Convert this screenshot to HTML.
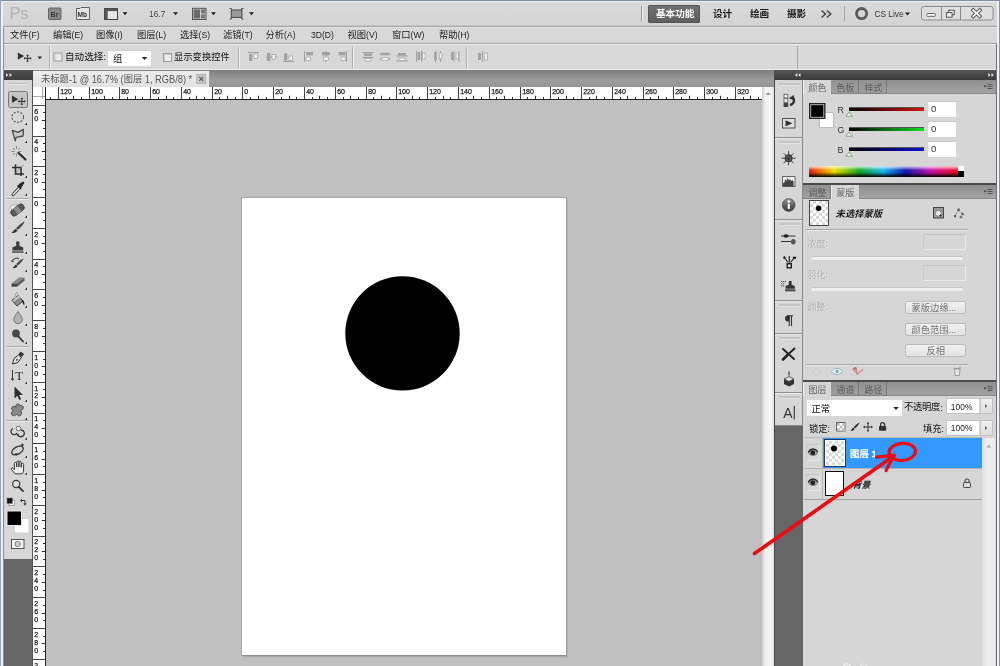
<!DOCTYPE html>
<html><head><meta charset="utf-8"><title>Photoshop CS5</title>
<style>
html,body{margin:0;padding:0;}
body{width:1000px;height:666px;overflow:hidden;position:relative;background:#c0c0c0;font-family:'Liberation Sans', 'Noto Sans CJK SC', sans-serif;}
#r{position:absolute;left:0;top:0;width:1000px;height:666px;overflow:hidden;}
#r div{position:absolute;box-sizing:border-box;}
#o{position:absolute;left:0;top:0;will-change:transform;filter:blur(0.35px);}
#o text{font-family:'Liberation Sans', 'Noto Sans CJK SC', sans-serif;white-space:pre;}
</style></head><body><div id="r">
<div style="left:46px;top:100px;width:716px;height:566px;background:#c0c0c0;"></div>
<div style="left:0px;top:0px;width:1000px;height:27px;background:linear-gradient(#dadada,#d3d3d3);"></div>
<div style="left:0px;top:0px;width:1000px;height:1px;background:#7f8aa3;"></div>
<div style="left:0px;top:25px;width:1000px;height:1px;background:#c8c8c8;"></div>
<div style="left:0px;top:26px;width:1000px;height:1px;background:#a4a4a4;"></div>
<div style="left:0px;top:27px;width:1000px;height:17px;background:#d8d8d8;"></div>
<div style="left:0px;top:27px;width:1000px;height:1px;background:#e4e4e4;"></div>
<div style="left:0px;top:43px;width:1000px;height:1px;background:#a0a0a0;"></div>
<div style="left:0px;top:44px;width:1000px;height:1px;background:#f2f2f2;"></div>
<div style="left:0px;top:45px;width:1000px;height:25px;background:#d8d8d8;"></div>
<div style="left:0px;top:69px;width:1000px;height:1px;background:#ededed;"></div>
<div style="left:33px;top:70px;width:741px;height:17px;background:linear-gradient(#7e7e7e,#9c9c9c 60%,#949494);"></div>
<div style="left:4px;top:70px;width:29px;height:489px;background:#d6d6d6;"></div>
<div style="left:4px;top:70px;width:29px;height:10px;background:linear-gradient(#505050,#3c3c3c);"></div>
<div style="left:4px;top:559px;width:29px;height:107px;background:#666666;"></div>
<div style="left:32px;top:80px;width:1px;height:586px;background:#555;"></div>
<div style="left:33px;top:87px;width:729px;height:12px;background:#ffffff;"></div>
<div style="left:33px;top:99px;width:729px;height:1px;background:#222;"></div>
<div style="left:33px;top:99px;width:12px;height:567px;background:#ffffff;"></div>
<div style="left:45px;top:87px;width:1px;height:579px;background:#222;"></div>
<div style="left:33px;top:86px;width:13px;height:1px;background:#888;"></div>
<div style="left:241px;top:197px;width:326px;height:459px;background:#a4a4a4;"></div>
<div style="left:242px;top:198px;width:324px;height:457px;background:#ffffff;"></div>
<div style="left:242px;top:655px;width:325px;height:1px;background:#8e8e8e;"></div>
<div style="left:243px;top:656px;width:325px;height:1px;background:#a6a6a6;"></div>
<div style="left:244px;top:657px;width:324px;height:1px;background:#b8b8b8;"></div>
<div style="left:566px;top:198px;width:1px;height:458px;background:#9a9a9a;"></div>
<div style="left:567px;top:199px;width:1px;height:458px;background:#b6b6b6;"></div>
<div style="left:762px;top:87px;width:12px;height:579px;background:linear-gradient(90deg,#cfcfcf,#f2f2f2 30%,#f4f4f4 80%,#dcdcdc);"></div>
<div style="left:774px;top:70px;width:1px;height:596px;background:#4a4a4a;"></div>
<div style="left:775px;top:70px;width:221px;height:10px;background:linear-gradient(#555,#3a3a3a);"></div>
<div style="left:775px;top:80px;width:27px;height:346px;background:#d6d6d6;"></div>
<div style="left:775px;top:426px;width:28px;height:240px;background:#666666;"></div>
<div style="left:802px;top:80px;width:1px;height:346px;background:#8a8a8a;"></div>
<div style="left:803px;top:80px;width:193px;height:586px;background:#d6d6d6;"></div>
<div style="left:0px;top:0px;width:1px;height:666px;background:#9aa2b8;"></div>
<div style="left:1px;top:1px;width:2px;height:665px;background:#eef1fa;"></div>
<div style="left:3px;top:27px;width:1px;height:639px;background:#8e8e96;"></div>
<div style="left:996px;top:44px;width:1px;height:622px;background:#707070;"></div>
<div style="left:997px;top:1px;width:2px;height:665px;background:#eef1fa;"></div>
<div style="left:999px;top:0px;width:1px;height:666px;background:#8890a8;"></div>
<div style="left:1px;top:1px;width:998px;height:1px;background:#eceef6;"></div>
<div style="left:641px;top:6px;width:1px;height:15px;background:#9a9a9a;"></div>
<div style="left:642px;top:6px;width:1px;height:15px;background:#eee;"></div>
<div style="left:648px;top:5px;width:52px;height:18px;background:linear-gradient(#6e6e6e,#5f5f5f);border:1px solid #555;border-radius:1px;"></div>
<div style="left:844px;top:6px;width:1px;height:15px;background:#a8a8a8;"></div>
<div style="left:5px;top:47px;width:2px;height:20px;background:linear-gradient(90deg,#bcbcbc,#eee);"></div>
<div style="left:49px;top:46px;width:1px;height:23px;background:#b0b0b0;"></div>
<div style="left:50px;top:46px;width:1px;height:23px;background:#f0f0f0;"></div>
<div style="left:108px;top:50px;width:43px;height:16px;background:#ffffff;border-top:1px solid #cfcfcf;"></div>
<div style="left:238px;top:47px;width:1px;height:21px;background:#b0b0b0;"></div>
<div style="left:239px;top:47px;width:1px;height:21px;background:#f0f0f0;"></div>
<div style="left:352px;top:47px;width:1px;height:21px;background:#b0b0b0;"></div>
<div style="left:353px;top:47px;width:1px;height:21px;background:#f0f0f0;"></div>
<div style="left:466px;top:47px;width:1px;height:21px;background:#b0b0b0;"></div>
<div style="left:467px;top:47px;width:1px;height:21px;background:#f0f0f0;"></div>
<div style="left:797px;top:46px;width:1px;height:23px;background:#a8a8a8;"></div>
<div style="left:33px;top:71px;width:177px;height:16px;background:linear-gradient(#ececec,#e2e2e2);border-right:1px solid #9a9a9a;"></div>
<div style="left:33px;top:70px;width:741px;height:1px;background:#808080;"></div>
<div style="left:9px;top:83px;width:18px;height:1px;background:#bdbdbd;"></div>
<div style="left:9px;top:84px;width:18px;height:1px;background:#e8e8e8;"></div>
<div style="left:7px;top:198px;width:22px;height:1px;background:#a8a8a8;"></div>
<div style="left:7px;top:199px;width:22px;height:1px;background:#ececec;"></div>
<div style="left:7px;top:346px;width:22px;height:1px;background:#a8a8a8;"></div>
<div style="left:7px;top:347px;width:22px;height:1px;background:#ececec;"></div>
<div style="left:7px;top:420px;width:22px;height:1px;background:#a8a8a8;"></div>
<div style="left:7px;top:421px;width:22px;height:1px;background:#ececec;"></div>
<div style="left:779px;top:83px;width:21px;height:2px;background:#c4c4c4;"></div>
<div style="left:779px;top:85px;width:21px;height:1px;background:#e2e2e2;"></div>
<div style="left:775px;top:137px;width:27px;height:1px;background:#8e8e8e;"></div>
<div style="left:775px;top:138px;width:27px;height:1px;background:#e8e8e8;"></div>
<div style="left:779px;top:141px;width:21px;height:2px;background:#c4c4c4;"></div>
<div style="left:779px;top:143px;width:21px;height:1px;background:#e2e2e2;"></div>
<div style="left:775px;top:219px;width:27px;height:1px;background:#8e8e8e;"></div>
<div style="left:775px;top:220px;width:27px;height:1px;background:#e8e8e8;"></div>
<div style="left:779px;top:223px;width:21px;height:2px;background:#c4c4c4;"></div>
<div style="left:779px;top:225px;width:21px;height:1px;background:#e2e2e2;"></div>
<div style="left:775px;top:300px;width:27px;height:1px;background:#8e8e8e;"></div>
<div style="left:775px;top:301px;width:27px;height:1px;background:#e8e8e8;"></div>
<div style="left:779px;top:304px;width:21px;height:2px;background:#c4c4c4;"></div>
<div style="left:779px;top:306px;width:21px;height:1px;background:#e2e2e2;"></div>
<div style="left:775px;top:333px;width:27px;height:1px;background:#8e8e8e;"></div>
<div style="left:775px;top:334px;width:27px;height:1px;background:#e8e8e8;"></div>
<div style="left:779px;top:337px;width:21px;height:2px;background:#c4c4c4;"></div>
<div style="left:779px;top:339px;width:21px;height:1px;background:#e2e2e2;"></div>
<div style="left:775px;top:392px;width:27px;height:1px;background:#8e8e8e;"></div>
<div style="left:775px;top:393px;width:27px;height:1px;background:#e8e8e8;"></div>
<div style="left:779px;top:396px;width:21px;height:2px;background:#c4c4c4;"></div>
<div style="left:779px;top:398px;width:21px;height:1px;background:#e2e2e2;"></div>
<div style="left:775px;top:425px;width:28px;height:1px;background:#8e8e8e;"></div>
<div style="left:803px;top:80px;width:193px;height:14px;background:linear-gradient(#8f8f8f,#a4a4a4);"></div>
<div style="left:803px;top:93px;width:193px;height:1px;background:#8a8a8a;"></div>
<div style="left:803px;top:80px;width:28px;height:14px;background:#d6d6d6;border-left:1px solid #efefef;"></div>
<div style="left:831px;top:80px;width:28px;height:14px;background:linear-gradient(#929292,#9e9e9e);border-right:1px solid #7a7a7a;border-bottom:1px solid #808080;"></div>
<div style="left:859px;top:80px;width:28px;height:14px;background:linear-gradient(#929292,#9e9e9e);border-right:1px solid #7a7a7a;border-bottom:1px solid #808080;"></div>
<div style="left:849px;top:107px;width:75px;height:4px;background:linear-gradient(90deg,#000,#e01010);border-top:1px solid #555;"></div>
<div style="left:928px;top:101px;width:28px;height:16px;background:#fff;border-top:1px solid #c8c8c8;"></div>
<div style="left:849px;top:127px;width:75px;height:4px;background:linear-gradient(90deg,#000,#10e020);border-top:1px solid #555;"></div>
<div style="left:928px;top:121px;width:28px;height:16px;background:#fff;border-top:1px solid #c8c8c8;"></div>
<div style="left:849px;top:147px;width:75px;height:4px;background:linear-gradient(90deg,#000,#1010e0);border-top:1px solid #555;"></div>
<div style="left:928px;top:141px;width:28px;height:16px;background:#fff;border-top:1px solid #c8c8c8;"></div>
<div style="left:809px;top:166px;width:149px;height:11px;background:linear-gradient(rgba(255,255,255,0.8),rgba(255,255,255,0) 40%,rgba(0,0,0,0) 55%,rgba(0,0,0,1)),linear-gradient(90deg,#e8200c,#f0e000 17%,#10a828 34%,#18b4f0 50%,#1414b0 65%,#c814a8 82%,#f01010);"></div>
<div style="left:958px;top:166px;width:6px;height:5px;background:#fff;"></div>
<div style="left:958px;top:171px;width:6px;height:6px;background:#000;"></div>
<div style="left:803px;top:183px;width:193px;height:2px;background:#4a4a4a;"></div>
<div style="left:803px;top:185px;width:193px;height:14px;background:linear-gradient(#8f8f8f,#a4a4a4);"></div>
<div style="left:803px;top:198px;width:193px;height:1px;background:#8a8a8a;"></div>
<div style="left:803px;top:185px;width:28px;height:14px;background:linear-gradient(#929292,#9e9e9e);border-right:1px solid #7a7a7a;border-bottom:1px solid #808080;"></div>
<div style="left:831px;top:185px;width:28px;height:14px;background:#d6d6d6;border-left:1px solid #efefef;"></div>
<div style="left:809px;top:200px;width:20px;height:26px;background:#444;"></div>
<div style="left:810px;top:201px;width:18px;height:24px;background:#fff;background-image:linear-gradient(45deg,#dadada 25%,transparent 25%,transparent 75%,#dadada 75%),linear-gradient(45deg,#dadada 25%,transparent 25%,transparent 75%,#dadada 75%);background-size:6px 6px;background-position:0 0,3px 3px;"></div>
<div style="left:806px;top:229px;width:162px;height:1px;background:#a9a9a9;"></div>
<div style="left:806px;top:230px;width:162px;height:1px;background:#e4e4e4;"></div>
<div style="left:923px;top:234px;width:43px;height:16px;border:1px solid #e9e9e9;border-top-color:#c4c4c4;border-left-color:#c8c8c8;"></div>
<div style="left:811px;top:256px;width:152px;height:4px;background:#efefef;border-radius:2px;border-top:1px solid #c6c6c6;"></div>
<div style="left:923px;top:265px;width:43px;height:16px;border:1px solid #e9e9e9;border-top-color:#c4c4c4;border-left-color:#c8c8c8;"></div>
<div style="left:811px;top:287px;width:152px;height:4px;background:#efefef;border-radius:2px;border-top:1px solid #c6c6c6;"></div>
<div style="left:905px;top:301px;width:61px;height:13px;background:linear-gradient(#f0f0f0,#e2e2e2);border:1px solid #bdbdbd;border-radius:2px;"></div>
<div style="left:905px;top:323px;width:61px;height:13px;background:linear-gradient(#f0f0f0,#e2e2e2);border:1px solid #bdbdbd;border-radius:2px;"></div>
<div style="left:905px;top:344px;width:61px;height:13px;background:linear-gradient(#f0f0f0,#e2e2e2);border:1px solid #bdbdbd;border-radius:2px;"></div>
<div style="left:806px;top:364px;width:162px;height:1px;background:#a9a9a9;"></div>
<div style="left:806px;top:365px;width:162px;height:1px;background:#e4e4e4;"></div>
<div style="left:803px;top:380px;width:193px;height:2px;background:#4a4a4a;"></div>
<div style="left:803px;top:382px;width:193px;height:14px;background:linear-gradient(#8f8f8f,#a4a4a4);"></div>
<div style="left:803px;top:395px;width:193px;height:1px;background:#8a8a8a;"></div>
<div style="left:803px;top:382px;width:28px;height:14px;background:#d6d6d6;border-left:1px solid #efefef;"></div>
<div style="left:831px;top:382px;width:28px;height:14px;background:linear-gradient(#929292,#9e9e9e);border-right:1px solid #7a7a7a;border-bottom:1px solid #808080;"></div>
<div style="left:859px;top:382px;width:28px;height:14px;background:linear-gradient(#929292,#9e9e9e);border-right:1px solid #7a7a7a;border-bottom:1px solid #808080;"></div>
<div style="left:807px;top:400px;width:95px;height:16px;background:#fff;"></div>
<div style="left:946px;top:398px;width:47px;height:16px;border:1px solid #c2c2c2;border-radius:1px;"></div>
<div style="left:947px;top:399px;width:32px;height:14px;background:#fff;"></div>
<div style="left:980px;top:399px;width:12px;height:14px;background:linear-gradient(#f0f0f0,#dedede);border-left:1px solid #c6c6c6;"></div>
<div style="left:946px;top:420px;width:47px;height:16px;border:1px solid #c2c2c2;border-radius:1px;"></div>
<div style="left:947px;top:421px;width:32px;height:14px;background:#fff;"></div>
<div style="left:980px;top:421px;width:12px;height:14px;background:linear-gradient(#f0f0f0,#dedede);border-left:1px solid #c6c6c6;"></div>
<div style="left:804px;top:437px;width:178px;height:1px;background:#bcbcbc;"></div>
<div style="left:823px;top:438px;width:159px;height:30px;background:#3399ff;"></div>
<div style="left:822px;top:438px;width:1px;height:61px;background:#bdbdbd;"></div>
<div style="left:804px;top:468px;width:178px;height:1px;background:#b4b4b4;"></div>
<div style="left:804px;top:499px;width:178px;height:1px;background:#a4a4a4;"></div>
<div style="left:982px;top:438px;width:13px;height:228px;background:linear-gradient(90deg,#dedede,#efefef 40%,#ebebeb);"></div>
<div style="left:806px;top:444px;width:14px;height:17px;border:1px solid #c4c4c4;border-right-color:#e6e6e6;border-bottom-color:#e6e6e6;"></div>
<div style="left:806px;top:474px;width:14px;height:17px;border:1px solid #c4c4c4;border-right-color:#e6e6e6;border-bottom-color:#e6e6e6;"></div>
<div style="left:824px;top:439px;width:22px;height:28px;background:#fff;border:1px solid #1a3d6e;"></div>
<div style="left:825px;top:440px;width:20px;height:26px;background:#000;border:1px solid #fff;"></div>
<div style="left:826px;top:441px;width:18px;height:24px;background:#fff;background-image:linear-gradient(45deg,#dadada 25%,transparent 25%,transparent 75%,#dadada 75%),linear-gradient(45deg,#dadada 25%,transparent 25%,transparent 75%,#dadada 75%);background-size:6px 6px;background-position:0 0,3px 3px;"></div>
<div style="left:825px;top:471px;width:19px;height:25px;background:#fff;border:1px solid #111;"></div>
<svg id="o" width="1000" height="666" viewBox="0 0 1000 666"><defs><linearGradient id="ginfo" x1="0" y1="0" x2="0" y2="1"><stop offset="0" stop-color="#9a9a9a"/><stop offset="0.5" stop-color="#5e5e5e"/><stop offset="1" stop-color="#3e3e3e"/></linearGradient></defs>
<circle cx="402.5" cy="333.4" r="57.2" fill="#000"/>
<path d="M765.500 95l2.700 -3l2.700 3z" fill="#9a9a9a"/>
<g fill="#1a1a1a"><text x="60.20" y="94.40" font-size="7" stroke="#1a1a1a" stroke-width="0.25">120</text></g>
<g fill="#1a1a1a"><text x="91.20" y="94.40" font-size="7" stroke="#1a1a1a" stroke-width="0.25">100</text></g>
<g fill="#1a1a1a"><text x="121.20" y="94.40" font-size="7" stroke="#1a1a1a" stroke-width="0.25">80</text></g>
<g fill="#1a1a1a"><text x="152.20" y="94.40" font-size="7" stroke="#1a1a1a" stroke-width="0.25">60</text></g>
<g fill="#1a1a1a"><text x="183.20" y="94.40" font-size="7" stroke="#1a1a1a" stroke-width="0.25">40</text></g>
<g fill="#1a1a1a"><text x="214.20" y="94.40" font-size="7" stroke="#1a1a1a" stroke-width="0.25">20</text></g>
<g fill="#1a1a1a"><text x="244.20" y="94.40" font-size="7" stroke="#1a1a1a" stroke-width="0.25">0</text></g>
<g fill="#1a1a1a"><text x="275.20" y="94.40" font-size="7" stroke="#1a1a1a" stroke-width="0.25">20</text></g>
<g fill="#1a1a1a"><text x="306.20" y="94.40" font-size="7" stroke="#1a1a1a" stroke-width="0.25">40</text></g>
<g fill="#1a1a1a"><text x="337.20" y="94.40" font-size="7" stroke="#1a1a1a" stroke-width="0.25">60</text></g>
<g fill="#1a1a1a"><text x="368.20" y="94.40" font-size="7" stroke="#1a1a1a" stroke-width="0.25">80</text></g>
<g fill="#1a1a1a"><text x="398.20" y="94.40" font-size="7" stroke="#1a1a1a" stroke-width="0.25">100</text></g>
<g fill="#1a1a1a"><text x="429.20" y="94.40" font-size="7" stroke="#1a1a1a" stroke-width="0.25">120</text></g>
<g fill="#1a1a1a"><text x="460.20" y="94.40" font-size="7" stroke="#1a1a1a" stroke-width="0.25">140</text></g>
<g fill="#1a1a1a"><text x="491.20" y="94.40" font-size="7" stroke="#1a1a1a" stroke-width="0.25">160</text></g>
<g fill="#1a1a1a"><text x="522.20" y="94.40" font-size="7" stroke="#1a1a1a" stroke-width="0.25">180</text></g>
<g fill="#1a1a1a"><text x="552.20" y="94.40" font-size="7" stroke="#1a1a1a" stroke-width="0.25">200</text></g>
<g fill="#1a1a1a"><text x="583.20" y="94.40" font-size="7" stroke="#1a1a1a" stroke-width="0.25">220</text></g>
<g fill="#1a1a1a"><text x="614.20" y="94.40" font-size="7" stroke="#1a1a1a" stroke-width="0.25">240</text></g>
<g fill="#1a1a1a"><text x="645.20" y="94.40" font-size="7" stroke="#1a1a1a" stroke-width="0.25">260</text></g>
<g fill="#1a1a1a"><text x="675.20" y="94.40" font-size="7" stroke="#1a1a1a" stroke-width="0.25">280</text></g>
<g fill="#1a1a1a"><text x="706.20" y="94.40" font-size="7" stroke="#1a1a1a" stroke-width="0.25">300</text></g>
<g fill="#1a1a1a"><text x="737.20" y="94.40" font-size="7" stroke="#1a1a1a" stroke-width="0.25">320</text></g>
<g fill="#1a1a1a"><text x="34.30" y="113.56" font-size="7" stroke="#1a1a1a" stroke-width="0.25">6</text></g>
<g fill="#1a1a1a"><text x="34.30" y="121.46" font-size="7" stroke="#1a1a1a" stroke-width="0.25">0</text></g>
<g fill="#1a1a1a"><text x="34.30" y="144.34" font-size="7" stroke="#1a1a1a" stroke-width="0.25">4</text></g>
<g fill="#1a1a1a"><text x="34.30" y="152.24" font-size="7" stroke="#1a1a1a" stroke-width="0.25">0</text></g>
<g fill="#1a1a1a"><text x="34.30" y="175.12" font-size="7" stroke="#1a1a1a" stroke-width="0.25">2</text></g>
<g fill="#1a1a1a"><text x="34.30" y="183.02" font-size="7" stroke="#1a1a1a" stroke-width="0.25">0</text></g>
<g fill="#1a1a1a"><text x="34.30" y="205.90" font-size="7" stroke="#1a1a1a" stroke-width="0.25">0</text></g>
<g fill="#1a1a1a"><text x="34.30" y="236.68" font-size="7" stroke="#1a1a1a" stroke-width="0.25">2</text></g>
<g fill="#1a1a1a"><text x="34.30" y="244.58" font-size="7" stroke="#1a1a1a" stroke-width="0.25">0</text></g>
<g fill="#1a1a1a"><text x="34.30" y="267.46" font-size="7" stroke="#1a1a1a" stroke-width="0.25">4</text></g>
<g fill="#1a1a1a"><text x="34.30" y="275.36" font-size="7" stroke="#1a1a1a" stroke-width="0.25">0</text></g>
<g fill="#1a1a1a"><text x="34.30" y="298.24" font-size="7" stroke="#1a1a1a" stroke-width="0.25">6</text></g>
<g fill="#1a1a1a"><text x="34.30" y="306.14" font-size="7" stroke="#1a1a1a" stroke-width="0.25">0</text></g>
<g fill="#1a1a1a"><text x="34.30" y="329.02" font-size="7" stroke="#1a1a1a" stroke-width="0.25">8</text></g>
<g fill="#1a1a1a"><text x="34.30" y="336.92" font-size="7" stroke="#1a1a1a" stroke-width="0.25">0</text></g>
<g fill="#1a1a1a"><text x="34.30" y="359.80" font-size="7" stroke="#1a1a1a" stroke-width="0.25">1</text></g>
<g fill="#1a1a1a"><text x="34.30" y="367.70" font-size="7" stroke="#1a1a1a" stroke-width="0.25">0</text></g>
<g fill="#1a1a1a"><text x="34.30" y="375.60" font-size="7" stroke="#1a1a1a" stroke-width="0.25">0</text></g>
<g fill="#1a1a1a"><text x="34.30" y="390.58" font-size="7" stroke="#1a1a1a" stroke-width="0.25">1</text></g>
<g fill="#1a1a1a"><text x="34.30" y="398.48" font-size="7" stroke="#1a1a1a" stroke-width="0.25">2</text></g>
<g fill="#1a1a1a"><text x="34.30" y="406.38" font-size="7" stroke="#1a1a1a" stroke-width="0.25">0</text></g>
<g fill="#1a1a1a"><text x="34.30" y="421.36" font-size="7" stroke="#1a1a1a" stroke-width="0.25">1</text></g>
<g fill="#1a1a1a"><text x="34.30" y="429.26" font-size="7" stroke="#1a1a1a" stroke-width="0.25">4</text></g>
<g fill="#1a1a1a"><text x="34.30" y="437.16" font-size="7" stroke="#1a1a1a" stroke-width="0.25">0</text></g>
<g fill="#1a1a1a"><text x="34.30" y="452.14" font-size="7" stroke="#1a1a1a" stroke-width="0.25">1</text></g>
<g fill="#1a1a1a"><text x="34.30" y="460.04" font-size="7" stroke="#1a1a1a" stroke-width="0.25">6</text></g>
<g fill="#1a1a1a"><text x="34.30" y="467.94" font-size="7" stroke="#1a1a1a" stroke-width="0.25">0</text></g>
<g fill="#1a1a1a"><text x="34.30" y="482.92" font-size="7" stroke="#1a1a1a" stroke-width="0.25">1</text></g>
<g fill="#1a1a1a"><text x="34.30" y="490.82" font-size="7" stroke="#1a1a1a" stroke-width="0.25">8</text></g>
<g fill="#1a1a1a"><text x="34.30" y="498.72" font-size="7" stroke="#1a1a1a" stroke-width="0.25">0</text></g>
<g fill="#1a1a1a"><text x="34.30" y="513.70" font-size="7" stroke="#1a1a1a" stroke-width="0.25">2</text></g>
<g fill="#1a1a1a"><text x="34.30" y="521.60" font-size="7" stroke="#1a1a1a" stroke-width="0.25">0</text></g>
<g fill="#1a1a1a"><text x="34.30" y="529.50" font-size="7" stroke="#1a1a1a" stroke-width="0.25">0</text></g>
<g fill="#1a1a1a"><text x="34.30" y="544.48" font-size="7" stroke="#1a1a1a" stroke-width="0.25">2</text></g>
<g fill="#1a1a1a"><text x="34.30" y="552.38" font-size="7" stroke="#1a1a1a" stroke-width="0.25">2</text></g>
<g fill="#1a1a1a"><text x="34.30" y="560.28" font-size="7" stroke="#1a1a1a" stroke-width="0.25">0</text></g>
<g fill="#1a1a1a"><text x="34.30" y="575.26" font-size="7" stroke="#1a1a1a" stroke-width="0.25">2</text></g>
<g fill="#1a1a1a"><text x="34.30" y="583.16" font-size="7" stroke="#1a1a1a" stroke-width="0.25">4</text></g>
<g fill="#1a1a1a"><text x="34.30" y="591.06" font-size="7" stroke="#1a1a1a" stroke-width="0.25">0</text></g>
<g fill="#1a1a1a"><text x="34.30" y="606.04" font-size="7" stroke="#1a1a1a" stroke-width="0.25">2</text></g>
<g fill="#1a1a1a"><text x="34.30" y="613.94" font-size="7" stroke="#1a1a1a" stroke-width="0.25">6</text></g>
<g fill="#1a1a1a"><text x="34.30" y="621.84" font-size="7" stroke="#1a1a1a" stroke-width="0.25">0</text></g>
<g fill="#1a1a1a"><text x="34.30" y="636.82" font-size="7" stroke="#1a1a1a" stroke-width="0.25">2</text></g>
<g fill="#1a1a1a"><text x="34.30" y="644.72" font-size="7" stroke="#1a1a1a" stroke-width="0.25">8</text></g>
<g fill="#1a1a1a"><text x="34.30" y="652.62" font-size="7" stroke="#1a1a1a" stroke-width="0.25">0</text></g>
<g fill="#1a1a1a"><text x="34.30" y="667.60" font-size="7" stroke="#1a1a1a" stroke-width="0.25">3</text></g>
<rect x="50" y="97" width="1" height="2" fill="#333"/><rect x="58" y="87" width="1" height="12" fill="#444"/><rect x="66" y="97" width="1" height="2" fill="#333"/><rect x="73" y="95.8" width="1" height="3.2" fill="#333"/><rect x="81" y="97" width="1" height="2" fill="#333"/><rect x="89" y="87" width="1" height="12" fill="#444"/><rect x="96" y="97" width="1" height="2" fill="#333"/><rect x="104" y="95.8" width="1" height="3.2" fill="#333"/><rect x="112" y="97" width="1" height="2" fill="#333"/><rect x="119" y="87" width="1" height="12" fill="#444"/><rect x="127" y="97" width="1" height="2" fill="#333"/><rect x="135" y="95.8" width="1" height="3.2" fill="#333"/><rect x="142" y="97" width="1" height="2" fill="#333"/><rect x="150" y="87" width="1" height="12" fill="#444"/><rect x="158" y="97" width="1" height="2" fill="#333"/><rect x="166" y="95.8" width="1" height="3.2" fill="#333"/><rect x="173" y="97" width="1" height="2" fill="#333"/><rect x="181" y="87" width="1" height="12" fill="#444"/><rect x="189" y="97" width="1" height="2" fill="#333"/><rect x="196" y="95.8" width="1" height="3.2" fill="#333"/><rect x="204" y="97" width="1" height="2" fill="#333"/><rect x="212" y="87" width="1" height="12" fill="#444"/><rect x="219" y="97" width="1" height="2" fill="#333"/><rect x="227" y="95.8" width="1" height="3.2" fill="#333"/><rect x="235" y="97" width="1" height="2" fill="#333"/><rect x="242" y="87" width="1" height="12" fill="#444"/><rect x="250" y="97" width="1" height="2" fill="#333"/><rect x="258" y="95.8" width="1" height="3.2" fill="#333"/><rect x="266" y="97" width="1" height="2" fill="#333"/><rect x="273" y="87" width="1" height="12" fill="#444"/><rect x="281" y="97" width="1" height="2" fill="#333"/><rect x="289" y="95.8" width="1" height="3.2" fill="#333"/><rect x="296" y="97" width="1" height="2" fill="#333"/><rect x="304" y="87" width="1" height="12" fill="#444"/><rect x="312" y="97" width="1" height="2" fill="#333"/><rect x="319" y="95.8" width="1" height="3.2" fill="#333"/><rect x="327" y="97" width="1" height="2" fill="#333"/><rect x="335" y="87" width="1" height="12" fill="#444"/><rect x="343" y="97" width="1" height="2" fill="#333"/><rect x="350" y="95.8" width="1" height="3.2" fill="#333"/><rect x="358" y="97" width="1" height="2" fill="#333"/><rect x="366" y="87" width="1" height="12" fill="#444"/><rect x="373" y="97" width="1" height="2" fill="#333"/><rect x="381" y="95.8" width="1" height="3.2" fill="#333"/><rect x="389" y="97" width="1" height="2" fill="#333"/><rect x="396" y="87" width="1" height="12" fill="#444"/><rect x="404" y="97" width="1" height="2" fill="#333"/><rect x="412" y="95.8" width="1" height="3.2" fill="#333"/><rect x="419" y="97" width="1" height="2" fill="#333"/><rect x="427" y="87" width="1" height="12" fill="#444"/><rect x="435" y="97" width="1" height="2" fill="#333"/><rect x="443" y="95.8" width="1" height="3.2" fill="#333"/><rect x="450" y="97" width="1" height="2" fill="#333"/><rect x="458" y="87" width="1" height="12" fill="#444"/><rect x="466" y="97" width="1" height="2" fill="#333"/><rect x="473" y="95.8" width="1" height="3.2" fill="#333"/><rect x="481" y="97" width="1" height="2" fill="#333"/><rect x="489" y="87" width="1" height="12" fill="#444"/><rect x="496" y="97" width="1" height="2" fill="#333"/><rect x="504" y="95.8" width="1" height="3.2" fill="#333"/><rect x="512" y="97" width="1" height="2" fill="#333"/><rect x="520" y="87" width="1" height="12" fill="#444"/><rect x="527" y="97" width="1" height="2" fill="#333"/><rect x="535" y="95.8" width="1" height="3.2" fill="#333"/><rect x="543" y="97" width="1" height="2" fill="#333"/><rect x="550" y="87" width="1" height="12" fill="#444"/><rect x="558" y="97" width="1" height="2" fill="#333"/><rect x="566" y="95.8" width="1" height="3.2" fill="#333"/><rect x="573" y="97" width="1" height="2" fill="#333"/><rect x="581" y="87" width="1" height="12" fill="#444"/><rect x="589" y="97" width="1" height="2" fill="#333"/><rect x="596" y="95.8" width="1" height="3.2" fill="#333"/><rect x="604" y="97" width="1" height="2" fill="#333"/><rect x="612" y="87" width="1" height="12" fill="#444"/><rect x="620" y="97" width="1" height="2" fill="#333"/><rect x="627" y="95.8" width="1" height="3.2" fill="#333"/><rect x="635" y="97" width="1" height="2" fill="#333"/><rect x="643" y="87" width="1" height="12" fill="#444"/><rect x="650" y="97" width="1" height="2" fill="#333"/><rect x="658" y="95.8" width="1" height="3.2" fill="#333"/><rect x="666" y="97" width="1" height="2" fill="#333"/><rect x="673" y="87" width="1" height="12" fill="#444"/><rect x="681" y="97" width="1" height="2" fill="#333"/><rect x="689" y="95.8" width="1" height="3.2" fill="#333"/><rect x="697" y="97" width="1" height="2" fill="#333"/><rect x="704" y="87" width="1" height="12" fill="#444"/><rect x="712" y="97" width="1" height="2" fill="#333"/><rect x="720" y="95.8" width="1" height="3.2" fill="#333"/><rect x="727" y="97" width="1" height="2" fill="#333"/><rect x="735" y="87" width="1" height="12" fill="#444"/><rect x="743" y="97" width="1" height="2" fill="#333"/><rect x="750" y="95.8" width="1" height="3.2" fill="#333"/><rect x="758" y="97" width="1" height="2" fill="#333"/><rect x="33" y="105" width="12" height="1" fill="#444"/><rect x="43" y="112" width="2" height="1" fill="#333"/><rect x="41.8" y="120" width="3.2" height="1" fill="#333"/><rect x="43" y="128" width="2" height="1" fill="#333"/><rect x="33" y="136" width="12" height="1" fill="#444"/><rect x="43" y="143" width="2" height="1" fill="#333"/><rect x="41.8" y="151" width="3.2" height="1" fill="#333"/><rect x="43" y="159" width="2" height="1" fill="#333"/><rect x="33" y="166" width="12" height="1" fill="#444"/><rect x="43" y="174" width="2" height="1" fill="#333"/><rect x="41.8" y="182" width="3.2" height="1" fill="#333"/><rect x="43" y="189" width="2" height="1" fill="#333"/><rect x="33" y="197" width="12" height="1" fill="#444"/><rect x="43" y="205" width="2" height="1" fill="#333"/><rect x="41.8" y="212" width="3.2" height="1" fill="#333"/><rect x="43" y="220" width="2" height="1" fill="#333"/><rect x="33" y="228" width="12" height="1" fill="#444"/><rect x="43" y="236" width="2" height="1" fill="#333"/><rect x="41.8" y="243" width="3.2" height="1" fill="#333"/><rect x="43" y="251" width="2" height="1" fill="#333"/><rect x="33" y="259" width="12" height="1" fill="#444"/><rect x="43" y="266" width="2" height="1" fill="#333"/><rect x="41.8" y="274" width="3.2" height="1" fill="#333"/><rect x="43" y="282" width="2" height="1" fill="#333"/><rect x="33" y="289" width="12" height="1" fill="#444"/><rect x="43" y="297" width="2" height="1" fill="#333"/><rect x="41.8" y="305" width="3.2" height="1" fill="#333"/><rect x="43" y="313" width="2" height="1" fill="#333"/><rect x="33" y="320" width="12" height="1" fill="#444"/><rect x="43" y="328" width="2" height="1" fill="#333"/><rect x="41.8" y="336" width="3.2" height="1" fill="#333"/><rect x="43" y="343" width="2" height="1" fill="#333"/><rect x="33" y="351" width="12" height="1" fill="#444"/><rect x="43" y="359" width="2" height="1" fill="#333"/><rect x="41.8" y="366" width="3.2" height="1" fill="#333"/><rect x="43" y="374" width="2" height="1" fill="#333"/><rect x="33" y="382" width="12" height="1" fill="#444"/><rect x="43" y="389" width="2" height="1" fill="#333"/><rect x="41.8" y="397" width="3.2" height="1" fill="#333"/><rect x="43" y="405" width="2" height="1" fill="#333"/><rect x="33" y="413" width="12" height="1" fill="#444"/><rect x="43" y="420" width="2" height="1" fill="#333"/><rect x="41.8" y="428" width="3.2" height="1" fill="#333"/><rect x="43" y="436" width="2" height="1" fill="#333"/><rect x="33" y="443" width="12" height="1" fill="#444"/><rect x="43" y="451" width="2" height="1" fill="#333"/><rect x="41.8" y="459" width="3.2" height="1" fill="#333"/><rect x="43" y="466" width="2" height="1" fill="#333"/><rect x="33" y="474" width="12" height="1" fill="#444"/><rect x="43" y="482" width="2" height="1" fill="#333"/><rect x="41.8" y="490" width="3.2" height="1" fill="#333"/><rect x="43" y="497" width="2" height="1" fill="#333"/><rect x="33" y="505" width="12" height="1" fill="#444"/><rect x="43" y="513" width="2" height="1" fill="#333"/><rect x="41.8" y="520" width="3.2" height="1" fill="#333"/><rect x="43" y="528" width="2" height="1" fill="#333"/><rect x="33" y="536" width="12" height="1" fill="#444"/><rect x="43" y="543" width="2" height="1" fill="#333"/><rect x="41.8" y="551" width="3.2" height="1" fill="#333"/><rect x="43" y="559" width="2" height="1" fill="#333"/><rect x="33" y="566" width="12" height="1" fill="#444"/><rect x="43" y="574" width="2" height="1" fill="#333"/><rect x="41.8" y="582" width="3.2" height="1" fill="#333"/><rect x="43" y="590" width="2" height="1" fill="#333"/><rect x="33" y="597" width="12" height="1" fill="#444"/><rect x="43" y="605" width="2" height="1" fill="#333"/><rect x="41.8" y="613" width="3.2" height="1" fill="#333"/><rect x="43" y="620" width="2" height="1" fill="#333"/><rect x="33" y="628" width="12" height="1" fill="#444"/><rect x="43" y="636" width="2" height="1" fill="#333"/><rect x="41.8" y="643" width="3.2" height="1" fill="#333"/><rect x="43" y="651" width="2" height="1" fill="#333"/><rect x="33" y="659" width="12" height="1" fill="#444"/>
<path d="M33 96.500H45M42.500 87V99" stroke="#aaa" stroke-width="1" fill="none"/>
<text x="9.500" y="18.800" font-size="16.600" fill="#b4b4b4" letter-spacing="-0.3">Ps</text>
<rect x="48.500" y="8" width="12.500" height="11.500" rx="1" fill="#8a8a8a" stroke="#5e5e5e" stroke-width="0.900"/>
<text x="50.6" y="16.6" font-size="7" font-weight="bold" fill="#3a3a3a">Br</text>
<path d="M76.5 8.5h3.5l1 -1h8.5v12h-13z" fill="#e4e4e4" stroke="#555" stroke-width="0.9"/>
<text x="77.6" y="16.8" font-size="6.6" font-weight="bold" fill="#333">Mb</text>
<rect x="104.5" y="8.5" width="13" height="11" fill="#e6e6e6" stroke="#444" stroke-width="1"/><rect x="104.5" y="8.5" width="13" height="2.6" fill="#555"/><rect x="104.5" y="11" width="3.2" height="8.5" fill="#555"/>
<path d="M122.5 12.2h5l-2.5 3z" fill="#222"/>
<g fill="#444"><text x="149.00" y="17.20" font-size="8.4">16.7</text></g>
<path d="M173 12.2h5l-2.5 3z" fill="#222"/>
<rect x="192.5" y="8.3" width="13.5" height="11.2" fill="#d0d0d0" stroke="#555" stroke-width="1"/><rect x="193.6" y="9.4" width="6.4" height="9" fill="#6a6a6a"/><rect x="201" y="9.4" width="4" height="4" fill="#777"/><rect x="201" y="14.4" width="4" height="4" fill="#777"/>
<path d="M211 12.2h5l-2.5 3z" fill="#222"/>
<rect x="231.3" y="10" width="10.6" height="7.4" fill="#9a9a9a" stroke="#444" stroke-width="1"/><path d="M229.5 8.5h2v2M243.5 8.5h-2v2M229.5 19h2v-2M243.5 19h-2v-2" stroke="#555" stroke-width="1" fill="none"/>
<path d="M249 12.2h5l-2.5 3z" fill="#222"/>
<g fill="#fff"><text x="656.00" y="17.42" font-size="9.6" font-weight="bold">基本功能</text></g>
<g fill="#1a1a1a"><text x="713.00" y="17.42" font-size="9.6" font-weight="bold">设计</text></g>
<g fill="#1a1a1a"><text x="750.00" y="17.42" font-size="9.6" font-weight="bold">绘画</text></g>
<g fill="#1a1a1a"><text x="787.00" y="17.42" font-size="9.6" font-weight="bold">摄影</text></g>
<path d="M821.5 10.5l4 3.5l-4 3.5M826.8 10.5l4 3.5l-4 3.5" stroke="#444" stroke-width="1.5" fill="none"/>
<circle cx="861.600" cy="13.600" r="5.100" fill="none" stroke="#5a5a5a" stroke-width="2.800"/>
<g fill="#333"><text x="874.50" y="17.00" font-size="8.3">CS Live</text></g>
<path d="M905 12.4h5l-2.5 3z" fill="#222"/>
<rect x="921.5" y="6.5" width="71.5" height="13.5" rx="2.2" fill="#dedede" stroke="#8c8c8c" stroke-width="1"/><path d="M941.5 7v13M960.5 7v13" stroke="#8c8c8c" stroke-width="1"/><rect x="926.8" y="13.5" width="8.6" height="2.8" rx="0.8" fill="#fff" stroke="#555" stroke-width="0.9"/><rect x="948.7" y="10.2" width="5.6" height="4.6" fill="#eee" stroke="#444" stroke-width="0.9"/><rect x="946.5" y="12.6" width="5.6" height="4.6" fill="#eee" stroke="#444" stroke-width="0.9"/><path d="M973.200 10.200l6.600 6.200M979.800 10.200l-6.600 6.200" stroke="#5a5a5a" stroke-width="3.700" stroke-linecap="square"/><path d="M973.200 10.200l6.600 6.200M979.800 10.200l-6.600 6.200" stroke="#fafafa" stroke-width="1.700" stroke-linecap="square"/>
<g fill="#1c1c1c"><text x="10.00" y="38.33" font-size="9.3">文件</text><text transform="translate(28.60,38.40) scale(0.89,1)" font-size="9.6">(F)</text></g>
<g fill="#1c1c1c"><text x="53.00" y="38.33" font-size="9.3">编辑</text><text transform="translate(71.60,38.40) scale(0.89,1)" font-size="9.6">(E)</text></g>
<g fill="#1c1c1c"><text x="96.00" y="38.33" font-size="9.3">图像</text><text transform="translate(114.60,38.40) scale(0.89,1)" font-size="9.6">(I)</text></g>
<g fill="#1c1c1c"><text x="137.00" y="38.33" font-size="9.3">图层</text><text transform="translate(155.60,38.40) scale(0.89,1)" font-size="9.6">(L)</text></g>
<g fill="#1c1c1c"><text x="180.00" y="38.33" font-size="9.3">选择</text><text transform="translate(198.60,38.40) scale(0.89,1)" font-size="9.6">(S)</text></g>
<g fill="#1c1c1c"><text x="223.00" y="38.33" font-size="9.3">滤镜</text><text transform="translate(241.60,38.40) scale(0.89,1)" font-size="9.6">(T)</text></g>
<g fill="#1c1c1c"><text x="265.50" y="38.33" font-size="9.3">分析</text><text transform="translate(284.10,38.40) scale(0.89,1)" font-size="9.6">(A)</text></g>
<g fill="#1c1c1c"><text transform="translate(311.00,38.40) scale(0.89,1)" font-size="9.6">3D(D)</text></g>
<g fill="#1c1c1c"><text x="347.50" y="38.33" font-size="9.3">视图</text><text transform="translate(366.10,38.40) scale(0.89,1)" font-size="9.6">(V)</text></g>
<g fill="#1c1c1c"><text x="392.00" y="38.33" font-size="9.3">窗口</text><text transform="translate(410.60,38.40) scale(0.89,1)" font-size="9.6">(W)</text></g>
<g fill="#1c1c1c"><text x="439.00" y="38.33" font-size="9.3">帮助</text><text transform="translate(457.60,38.40) scale(0.89,1)" font-size="9.6">(H)</text></g>
<path d="M17.8 52.5v7.200l6.400 -3.600z" fill="#333"/><path d="M27.6 55.1v6.400M24.4 58.3h6.400" stroke="#333" stroke-width="1"/><path d="M27.6 54.3l1.400 1.600h-2.800zM27.6 62.3l1.400 -1.600h-2.800zM23.6 58.3l1.600 -1.400v2.800zM31.6 58.3l-1.600 -1.400v2.800z" fill="#333"/>
<path d="M37.5 56.4h4.6l-2.3 2.800z" fill="#222"/>
<rect x="54.0" y="53.0" width="8" height="8" fill="#ececec" stroke="#9c9c9c" stroke-width="1"/><path d="M55.0 60.5v-6.500h6.500" stroke="#c8c8c8" stroke-width="1" fill="none"/>
<g fill="#111"><text x="65.00" y="59.92" font-size="9.6">自动选择</text><text x="103.40" y="60.30" font-size="9">:</text></g>
<g fill="#111"><text x="113.00" y="61.62" font-size="9.4">组</text></g>
<path d="M141.8 57h5.4l-2.7 3z" fill="#222"/>
<rect x="163.5" y="53.5" width="8" height="8" fill="#ececec" stroke="#9c9c9c" stroke-width="1"/><path d="M164.5 61v-6.500h6.500" stroke="#c8c8c8" stroke-width="1" fill="none"/>
<g fill="#111"><text x="174.00" y="59.93" font-size="9.3">显示变换控件</text></g>
<path d="M248 52.5h11" stroke="#a2a2a2"/><rect x="249" y="54" width="3.4" height="7" fill="#a2a2a2"/><rect x="254" y="54" width="3.4" height="4.500" fill="#f2f2f2" stroke="#a2a2a2" stroke-width="0.7"/>
<path d="M266 57h11" stroke="#a2a2a2"/><rect x="267" y="53" width="3.4" height="8" fill="#a2a2a2"/><rect x="272" y="54.5" width="3.4" height="5" fill="#f2f2f2" stroke="#a2a2a2" stroke-width="0.7"/>
<path d="M283 61.5h11" stroke="#a2a2a2"/><rect x="284" y="53.5" width="3.4" height="7" fill="#a2a2a2"/><rect x="289" y="56" width="3.4" height="4.500" fill="#f2f2f2" stroke="#a2a2a2" stroke-width="0.7"/>
<path d="M304.5 51v11" stroke="#a2a2a2"/><rect x="306" y="52" width="7" height="3.4" fill="#a2a2a2"/><rect x="306" y="57" width="4.500" height="3.4" fill="#f2f2f2" stroke="#a2a2a2" stroke-width="0.7"/>
<path d="M326 51v11" stroke="#a2a2a2"/><rect x="322" y="52" width="8" height="3.4" fill="#a2a2a2"/><rect x="323.5" y="57" width="5" height="3.4" fill="#f2f2f2" stroke="#a2a2a2" stroke-width="0.7"/>
<path d="M346.5 51v11" stroke="#a2a2a2"/><rect x="338.5" y="52" width="7" height="3.4" fill="#a2a2a2"/><rect x="341" y="57" width="4.500" height="3.4" fill="#f2f2f2" stroke="#a2a2a2" stroke-width="0.7"/>
<path d="M362 52.5h12M362 57.5h12" stroke="#a2a2a2"/><rect x="364" y="53.5" width="8" height="2.600" fill="#a2a2a2"/><rect x="365" y="58.5" width="6" height="2.600" fill="#f2f2f2" stroke="#a2a2a2" stroke-width="0.7"/>
<path d="M379 54h12M379 59h12" stroke="#a2a2a2"/><rect x="381" y="52.7" width="8" height="2.600" fill="#a2a2a2"/><rect x="382" y="57.7" width="6" height="2.600" fill="#f2f2f2" stroke="#a2a2a2" stroke-width="0.7"/>
<path d="M396 56h12M396 61h12" stroke="#a2a2a2"/><rect x="398" y="53" width="8" height="2.600" fill="#a2a2a2"/><rect x="399" y="58" width="6" height="2.600" fill="#f2f2f2" stroke="#a2a2a2" stroke-width="0.7"/>
<path d="M416.5 51v11M421.5 51v11" stroke="#a2a2a2"/><rect x="417.5" y="52" width="2.600" height="8" fill="#a2a2a2"/><rect x="422.5" y="53" width="2.600" height="6" fill="#f2f2f2" stroke="#a2a2a2" stroke-width="0.7"/>
<path d="M435.5 51v11M440.5 51v11" stroke="#a2a2a2"/><rect x="434.2" y="52" width="2.600" height="8" fill="#a2a2a2"/><rect x="439.2" y="53" width="2.600" height="6" fill="#f2f2f2" stroke="#a2a2a2" stroke-width="0.7"/>
<path d="M454 51v11M459 51v11" stroke="#a2a2a2"/><rect x="451" y="52" width="2.600" height="8" fill="#a2a2a2"/><rect x="456" y="53" width="2.600" height="6" fill="#f2f2f2" stroke="#a2a2a2" stroke-width="0.7"/>
<path d="M482.5 51v11" stroke="#a2a2a2"/><rect x="478" y="53" width="3" height="7" fill="#a2a2a2"/><rect x="484.5" y="53" width="3" height="7" fill="#f2f2f2" stroke="#a2a2a2" stroke-width="0.7"/>
<g fill="#555"><text x="41.00" y="82.43" font-size="9.3">未标题</text><text transform="translate(68.90,83.00) scale(0.9,1)" font-size="10.3">-1 @ 16.7% (</text><text x="123.65" y="82.43" font-size="9.3">图层</text><text transform="translate(142.25,83.00) scale(0.9,1)" font-size="10.3"> 1, RGB/8) *</text></g>
<rect x="196.800" y="74.300" width="9" height="9" fill="#c6c6c6" stroke="#aaa" stroke-width="0.800"/><path d="M199.300 76.800l4 4M203.300 76.800l-4 4" stroke="#5a5a5a" stroke-width="1.100"/>
<path d="M6 73l2.4 2l-2.4 2zM9.6 73l2.4 2l-2.4 2z" fill="#ddd"/>
<rect x="8.5" y="91.5" width="19" height="16" rx="1.6" fill="#c4c4c4" stroke="#7a7a7a" stroke-width="1"/>
<path d="M12 95.6v7.200l6.400 -3.600z" fill="#333"/><path d="M21.8 98.19999999999999v6.400M18.6 101.39999999999999h6.400" stroke="#333" stroke-width="1"/><path d="M21.8 97.39999999999999l1.400 1.600h-2.800zM21.8 105.39999999999999l1.400 -1.600h-2.800zM17.8 101.39999999999999l1.600 -1.400v2.800zM25.8 101.39999999999999l-1.600 -1.400v2.800z" fill="#333"/>
<ellipse cx="17.700" cy="117.100" rx="5.800" ry="5.200" fill="none" stroke="#5a5a5a" stroke-width="1.100" stroke-dasharray="2.200 1.300"/>
<path d="M27 122.8v2.2h-2.2z" fill="#222"/>
<path d="M12.300 130.400l5.700 2l5.400 -3l-0.300 6.600l-7 1.400l-0.900 3.400z" fill="#cacaca" stroke="#4a4a4a" stroke-width="1.300" stroke-linejoin="round"/>
<path d="M27 140.8v2.2h-2.2z" fill="#222"/>
<path d="M18.5 153l7 6.5" stroke="#2a2a2a" stroke-width="2.2" stroke-linecap="round"/><path d="M16.5 146v3M16.5 153.5v3M11.5 151.5h3M18.5 151.5h3M13 148l2 2M20 148l-2 2M13 155l2 -2" stroke="#8a8a8a" stroke-width="1"/>
<path d="M15.5 164.5v9.5h8.5M12 167.5h9v8.5" stroke="#2e2e2e" stroke-width="1.6" fill="none"/><path d="M23.5 165l-8 8" stroke="#777" stroke-width="0.8"/>
<path d="M27 175.5v2.2h-2.2z" fill="#222"/>
<path d="M13 194.600l7 -7.400" stroke="#444" stroke-width="3.200" stroke-linecap="round"/><path d="M13.200 194.400l6.600 -7" stroke="#e2e2e2" stroke-width="1.500" stroke-linecap="round"/><path d="M18.600 187.400l3 -3.400" stroke="#2a2a2a" stroke-width="3.800" stroke-linecap="butt"/><path d="M21.400 184.600l1.600 -1.800" stroke="#2a2a2a" stroke-width="2.600" stroke-linecap="round"/><path d="M17.600 185.600l3.600 3.400" stroke="#2a2a2a" stroke-width="1.400"/>
<path d="M27 193.5v2.2h-2.2z" fill="#222"/>
<g transform="rotate(-38 17.5 210)"><rect x="10" y="206.6" width="15" height="6.8" rx="3.2" fill="#5a5a5a" stroke="#3a3a3a" stroke-width="0.8"/><rect x="15" y="206.6" width="5" height="6.8" fill="#8c8c8c"/></g><path d="M10.5 207.5c0 -2 4 -3.5 6.5 -2.5l-5 5z" fill="#f4f4f4" stroke="#888" stroke-width="0.6"/>
<path d="M27 215.5v2.2h-2.2z" fill="#222"/>
<path d="M24.5 221.5c-2 0.5 -6 4 -8.5 6.8l1.6 1.7c3 -2.4 6.5 -6 6.900 -8.500z" fill="#4a4a4a"/><path d="M15.600 228.8l1.800 1.800c-1 2.200 -3.500 2.700 -6 2.200c1.700 -0.900 1.800 -2.500 4.200 -4z" fill="#333"/>
<path d="M27 233.5v2.2h-2.2z" fill="#222"/>
<path d="M16.200 241.500h3.200v4.300l3.800 1.600v3h-10.800v-3l3.800 -1.600z" fill="#3c3c3c"/><rect x="12" y="251.200" width="11.600" height="1.700" fill="#5a5a5a"/>
<path d="M27 251.5v2.2h-2.2z" fill="#222"/>
<path d="M23.500 258.500c-2 0.600 -5 3.200 -7.200 5.600l1.400 1.500c2.500 -2 5.200 -5 5.800 -7.100z" fill="#444"/><path d="M16 264.600l1.500 1.500c-0.800 1.800 -2.800 2.400 -5 2c1.400 -0.800 1.500 -2.200 3.500 -3.500z" fill="#333"/><path d="M12 262a4.500 4.500 0 0 1 7 -3" stroke="#555" stroke-width="1.100" fill="none"/><path d="M11 260l1 2.600l2.300 -1.400z" fill="#555"/>
<path d="M27 269.5v2.2h-2.2z" fill="#222"/>
<path d="M11.500 283.500l7.500 -6h5.500l-7.500 6z" fill="#8a8a8a"/><path d="M11.500 283.500h5.500v3.200h-5.500z" fill="#444"/><path d="M17 283.500l7.500 -6v3.200l-7.500 6z" fill="#5e5e5e"/>
<path d="M27 287.5v2.2h-2.2z" fill="#222"/>
<path d="M12 300.200l6 -4.600l5 5.400l-6 5z" fill="#8c8c8c" stroke="#444" stroke-width="1"/><path d="M12 300.200l6 -4.600l2 2.200l-6 4.600z" fill="#c4c4c4" stroke="#555" stroke-width="0.600"/><path d="M15.200 298c-0.600 -3.600 0.200 -5.400 1.800 -5.200c1.600 0.200 2 2.600 2 6" stroke="#f4f4f4" stroke-width="1.600" fill="none"/><path d="M15.200 298c-0.600 -3.600 0.200 -5.400 1.800 -5.200c1.600 0.200 2 2.600 2 6" stroke="#666" stroke-width="0.700" fill="none"/><path d="M21.800 299.600c2.200 0.800 3 3 2.400 5.800c-1.200 -1.200 -2 -2.800 -2.400 -5.800z" fill="#222"/>
<path d="M27 305.5v2.2h-2.2z" fill="#222"/>
<path d="M18 311.500c2 3.200 4.200 5.200 4.200 8a4.200 4.200 0 0 1 -8.400 0c0 -2.800 2.200 -4.800 4.200 -8z" fill="#b4b4b4" stroke="#6a6a6a" stroke-width="0.900"/>
<path d="M27 323.5v2.2h-2.2z" fill="#222"/>
<circle cx="16" cy="333.500" r="3.900" fill="#4a4a4a"/><path d="M18.500 336.500l4.500 5" stroke="#2e2e2e" stroke-width="1.800" stroke-linecap="round"/>
<path d="M27 341.5v2.2h-2.2z" fill="#222"/>
<path d="M20.500 351.500l3.500 2.500l-2 3l-3.500 -2.500z" fill="#333"/><path d="M18.500 355l3 2.200l-3.500 5.300l-5.500 1.500l1.500 -5.500z" fill="#dcdcdc" stroke="#333" stroke-width="1"/><circle cx="16.800" cy="359.800" r="0.900" fill="#333"/>
<path d="M27 363.5v2.2h-2.2z" fill="#222"/>
<text x="15.300" y="380.300" font-size="13" font-family="'Liberation Serif',serif" fill="#2e2e2e" style="font-family:'Liberation Serif',serif">T</text><path d="M12.500 370v8.500" stroke="#333" stroke-width="1"/><circle cx="12.500" cy="379.200" r="1.200" fill="#333"/>
<path d="M27 381.5v2.2h-2.2z" fill="#222"/>
<path d="M14.500 386.500v12l2.800 -2.800l2 4.300l1.800 -0.900l-2 -4.200h3.900z" fill="#2e2e2e"/>
<path d="M27 399.5v2.2h-2.2z" fill="#222"/>
<path d="M16.500 404.500c1.500 -1.200 3.200 -0.600 3.500 1.200c1.800 -0.800 3.800 0.500 3.200 2.600c-0.400 1.500 -1.700 1.900 -2.700 2.400c1.200 1.600 1.700 3.300 0.200 4.600c-1.700 1.300 -3.200 0.200 -4.200 -1.300c-0.900 1.500 -2.700 2.300 -4.200 1.200c-1.600 -1.300 -0.600 -3.600 1.100 -4.600c-1.800 -0.600 -2.200 -2.400 -1.100 -3.600c1.100 -1.200 2.700 -0.600 3.700 0.300c-0.200 -1 -0.200 -2.100 0.500 -2.800z" fill="#8a8a8a" stroke="#4a4a4a" stroke-width="1"/>
<path d="M27 417.5v2.2h-2.2z" fill="#222"/>
<circle cx="18.500" cy="428.500" r="2.300" fill="#e8e8e8" stroke="#555" stroke-width="0.800"/><path d="M13 428.500a3.200 3.200 0 1 0 4 4.500M21 430c3 0.500 4.500 3.500 2.500 5.500c-1.500 1.500 -4 1.200 -5.500 0" stroke="#333" stroke-width="1.300" fill="none"/><path d="M16 434.500l2.800 -0.800l-0.500 2.900z" fill="#333"/>
<path d="M27 437.5v2.2h-2.2z" fill="#222"/>
<ellipse cx="17.500" cy="450.500" rx="6.300" ry="3.600" transform="rotate(-30 17.500 450.500)" fill="none" stroke="#333" stroke-width="1.300"/><path d="M14.500 453.500l3 -0.400l-1.200 2.600z" fill="#333"/><path d="M20.500 445h3.500M22.200 443.500v3" stroke="#333" stroke-width="1.100"/>
<path d="M27 455.5v2.2h-2.2z" fill="#222"/>
<path d="M15 473.800L11.400 469.400c-0.700 -1 0.700 -2 1.600 -1.100L14.400 469.800V463.600a1.150 1.150 0 0 1 2.300 0V467V462.200a1.150 1.150 0 0 1 2.300 0V467V462.600a1.150 1.150 0 0 1 2.300 0V467.400V464.400a1.150 1.150 0 0 1 2.300 0V470c0 1.800 -0.600 2.900 -1.500 3.800Z" fill="#ececec" stroke="#333" stroke-width="0.950" stroke-linejoin="round"/>
<path d="M27 472.5v2.2h-2.2z" fill="#222"/>
<circle cx="16.200" cy="484" r="3.600" fill="#dedede" stroke="#333" stroke-width="1.200"/><path d="M18.800 486.800l4.200 4.400" stroke="#333" stroke-width="1.800" stroke-linecap="round"/>
<rect x="9" y="500" width="5.500" height="5.500" fill="#fff" stroke="#666" stroke-width="0.600"/><rect x="7" y="498" width="5.500" height="5.500" fill="#111" stroke="#777" stroke-width="0.600"/>
<path d="M21.500 500.500h3.500v3.500" stroke="#333" stroke-width="1" fill="none"/><path d="M20 500.500l2 -1.800v3.600zM25 505.500l-1.800 -2h3.600z" fill="#333"/>
<rect x="14.500" y="518.500" width="14.500" height="14.500" fill="#fff" stroke="#d0d0d0" stroke-width="1"/><rect x="7" y="511" width="14.500" height="14.500" fill="#000" stroke="#e8e8e8" stroke-width="1"/>
<rect x="11.500" y="539.500" width="12.500" height="9" fill="#f4f4f4" stroke="#555" stroke-width="1"/><circle cx="17.700" cy="544" r="2.600" fill="#d0d0d0" stroke="#666" stroke-width="0.800"/>
<path d="M797.300 73l-2.400 2l2.400 2zM800.500 73l-2.400 2l2.400 2z" fill="#ddd"/>
<path d="M988.300 73l2.400 2l-2.400 2zM991.500 73l2.400 2l-2.400 2z" fill="#ddd"/>
<rect x="784" y="94.300" width="3.800" height="3.600" fill="#f4f4f4" stroke="#555" stroke-width="0.800"/><rect x="784" y="98.700" width="3.800" height="3.600" fill="#f4f4f4" stroke="#555" stroke-width="0.800"/><rect x="783.600" y="103" width="4.600" height="4" fill="#444"/><path d="M790 105.200c4.500 -1.500 5.500 -6 1.800 -8.500" stroke="#333" stroke-width="2.300" fill="none"/><path d="M788.800 98.200l5 -3.200l-0.200 5.200z" fill="#333"/>
<rect x="782.500" y="118.500" width="12.500" height="9.500" fill="#e0e0e0" stroke="#555" stroke-width="1"/><path d="M785.500 120.200v6.200l7 -3.100z" fill="#333"/>
<g transform="translate(-0.400,-1.300)"><circle cx="789" cy="159.500" r="3.300" fill="#777" stroke="#333" stroke-width="1.200"/><path d="M789 152.500v14M782 159.500h14M784 154.500l10 10M794 154.500l-10 10" stroke="#444" stroke-width="1"/><circle cx="789" cy="159.500" r="1.300" fill="#333"/></g>
<rect x="782.500" y="176.500" width="12.500" height="10" fill="#efefef" stroke="#666" stroke-width="1"/><path d="M783 186.500v-3l1.500 -1.500l1 -3l1.200 2l1 -3.500l1.200 3l1.200 -1.500l1 2l1.500 -1l1 2v4.500z" fill="#444"/>
<circle cx="788.700" cy="205" r="6.400" fill="url(#ginfo)" stroke="#4a4a4a" stroke-width="0.700"/><rect x="787.700" y="203.800" width="2.200" height="5" fill="#fff"/><circle cx="788.800" cy="201.600" r="1.300" fill="#fff"/>
<path d="M781 236h14.500M781 241.500h10" stroke="#333" stroke-width="1.200"/><ellipse cx="786" cy="236" rx="2.600" ry="1.700" fill="#222"/><ellipse cx="793.300" cy="241.800" rx="2.300" ry="2.700" fill="#555"/>
<path d="M786.500 263v5.500h5.500v-5.500z" fill="#222"/><rect x="788" y="264.500" width="2.500" height="2.500" fill="#eee"/><path d="M788 262.500l-3.500 -5M789.300 262.500v-6.500M790.500 262.500l3.500 -4.500" stroke="#222" stroke-width="1.200"/><ellipse cx="794.500" cy="257.800" rx="1.800" ry="1.300" fill="#222"/><ellipse cx="784.300" cy="257.500" rx="1" ry="1.500" fill="#222"/>
<path d="M788.800 281h2.800v3.800l3.200 1.300v2.600h-9.200v-2.600l3.200 -1.300z" fill="#333"/><rect x="785" y="289.300" width="10.400" height="2" fill="#444"/><path d="M781 281.500h5M781 283.800h4M781 286h3.500" stroke="#444" stroke-width="1" stroke-dasharray="1.200 0.800"/>
<path d="M791.500 316v10M789.200 316v10" stroke="#333" stroke-width="1.100"/><path d="M789.500 315.500h-1.500a3 3 0 0 0 0 6h1.500z" fill="#333"/><path d="M787 315.800h6" stroke="#333" stroke-width="1"/>
<path d="M783 349l11 10M794.500 348.500l-6 5.500" stroke="#222" stroke-width="1.900" stroke-linecap="round"/><path d="M787.500 355l-4.500 4.500" stroke="#222" stroke-width="2.600" stroke-linecap="round"/>
<path d="M789 376.500l5 2.500v5l-5 2.500l-5 -2.500v-5z" fill="#333"/><path d="M789 376.500l5 2.500l-5 2.500l-5 -2.500z" fill="#ddd" stroke="#333" stroke-width="0.600"/><path d="M789 371.500v4" stroke="#333" stroke-width="1.200"/>
<text x="783.200" y="417.800" font-size="14" fill="#333">A</text><path d="M794.300 406v13.500" stroke="#333" stroke-width="1.100"/>
<g fill="#6a6a6a"><text x="808.20" y="90.73" font-size="9.2">颜色</text></g>
<g fill="#5e5e5e"><text x="836.20" y="90.73" font-size="9.2">色板</text></g>
<g fill="#5e5e5e"><text x="864.20" y="90.73" font-size="9.2">样式</text></g>
<path d="M983.500 85.5h3l-1.500 2z" fill="#333"/><path d="M987.500 84.5h5M987.500 86.5h5M987.500 88.5h5" stroke="#555" stroke-width="1"/>
<rect x="819.500" y="112.500" width="14" height="15" fill="#fff" stroke="#bcbcbc" stroke-width="1"/><rect x="809.500" y="103.500" width="15.500" height="15" fill="#000" stroke="#222" stroke-width="1"/><rect x="810.700" y="104.700" width="13.100" height="12.600" fill="none" stroke="#c8c8c8" stroke-width="0.900"/>
<g fill="#333"><text transform="translate(837.50,112.50) scale(0.9,1)" font-size="9.8">R</text></g>
<path d="M849.200 112l3.300 4.200h-6.600z" fill="#f2f7f0" stroke="#7fa57a" stroke-width="1"/>
<g fill="#333"><text x="931.00" y="112.00" font-size="9.6">0</text></g>
<g fill="#333"><text transform="translate(837.50,132.50) scale(0.9,1)" font-size="9.8">G</text></g>
<path d="M849.200 132l3.300 4.200h-6.600z" fill="#f2f7f0" stroke="#7fa57a" stroke-width="1"/>
<g fill="#333"><text x="931.00" y="132.00" font-size="9.6">0</text></g>
<g fill="#333"><text transform="translate(837.50,152.50) scale(0.9,1)" font-size="9.8">B</text></g>
<path d="M849.200 152l3.300 4.200h-6.600z" fill="#f2f7f0" stroke="#7fa57a" stroke-width="1"/>
<g fill="#333"><text x="931.00" y="152.00" font-size="9.6">0</text></g>
<g fill="#5e5e5e"><text x="808.20" y="195.73" font-size="9.2">调整</text></g>
<g fill="#6a6a6a"><text x="836.20" y="195.73" font-size="9.2">蒙版</text></g>
<path d="M983.500 190.5h3l-1.500 2z" fill="#333"/><path d="M987.500 189.5h5M987.500 191.5h5M987.500 193.5h5" stroke="#555" stroke-width="1"/>
<circle cx="818.600" cy="208.300" r="2.700" fill="#000"/>
<g fill="#1a1a1a" transform="translate(835.50,217.30) skewX(-14) translate(-835.50,-217.30)"><text x="835.50" y="216.93" font-size="9.3" font-weight="bold">未选择蒙版</text></g>
<rect x="933.500" y="207.500" width="10" height="10.500" fill="#9a9a9a" stroke="#444" stroke-width="1"/><circle cx="938.300" cy="213.300" r="2.900" fill="#f4f4f4" stroke="#777" stroke-width="0.800"/><path d="M940.500 214v3M939 215.500h3" stroke="#444" stroke-width="0.800"/>
<path d="M955 216l3.500 -6l4 3.500" stroke="#666" stroke-width="1" fill="none" stroke-dasharray="1.500 1"/><rect x="957.500" y="208.500" width="2.200" height="2.200" fill="#555"/><rect x="954" y="215" width="2.200" height="2.200" fill="#555"/><rect x="961.500" y="213" width="2.200" height="2.200" fill="#555"/><path d="M961 215.500v3M959.500 217h3" stroke="#444" stroke-width="0.800"/>
<g fill="#f0f0f0"><text x="807.80" y="247.43" font-size="9.3">浓度</text><text x="826.40" y="247.80" font-size="8.835">:</text></g>
<g fill="#adadad"><text x="807.00" y="246.63" font-size="9.3">浓度</text><text x="825.60" y="247.00" font-size="8.835">:</text></g>
<g fill="#f0f0f0"><text x="807.80" y="278.43" font-size="9.3">羽化</text><text x="826.40" y="278.80" font-size="8.835">:</text></g>
<g fill="#adadad"><text x="807.00" y="277.63" font-size="9.3">羽化</text><text x="825.60" y="278.00" font-size="8.835">:</text></g>
<g fill="#f0f0f0"><text x="807.80" y="310.43" font-size="9.3">调整</text><text x="826.40" y="310.80" font-size="8.835">:</text></g>
<g fill="#adadad"><text x="807.00" y="309.63" font-size="9.3">调整</text><text x="825.60" y="310.00" font-size="8.835">:</text></g>
<g fill="#747474"><text x="911.50" y="310.63" font-size="9.3">蒙版边缘</text><text x="948.70" y="311.00" font-size="8.835">...</text></g>
<g fill="#747474"><text x="911.50" y="332.63" font-size="9.3">颜色范围</text><text x="948.70" y="333.00" font-size="8.835">...</text></g>
<g fill="#747474"><text x="926.50" y="353.63" font-size="9.3">反相</text></g>
<circle cx="816.500" cy="371.500" r="3.300" fill="none" stroke="#c2c2c2" stroke-width="1" stroke-dasharray="1.500 1"/><path d="M831.500 371.500c3 -4 8 -4 11 0c-3 4 -8 4 -11 0z" fill="#f4f4f4" stroke="#8ab" stroke-width="0.900"/><circle cx="837" cy="371.500" r="1.700" fill="#7aa"/><path d="M852.500 368.500l5 5.500l5.500 -4.500M856 367.500l1.500 7.500" stroke="#c98a8a" stroke-width="1.200" fill="none"/><circle cx="855" cy="368.500" r="1.600" fill="#b77"/><path d="M954.500 369h5.500l-0.600 6.500h-4.300z" fill="#e4e4e4" stroke="#999" stroke-width="0.900"/><path d="M953.800 368.500h7M959 367.300l2 -0.500" stroke="#999" stroke-width="0.900"/>
<g fill="#6a6a6a"><text x="808.20" y="392.73" font-size="9.2">图层</text></g>
<g fill="#5e5e5e"><text x="836.20" y="392.73" font-size="9.2">通道</text></g>
<g fill="#5e5e5e"><text x="864.20" y="392.73" font-size="9.2">路径</text></g>
<path d="M983.500 387.5h3l-1.500 2z" fill="#333"/><path d="M987.500 386.500h5M987.500 388.500h5M987.500 390.500h5" stroke="#555" stroke-width="1"/>
<g fill="#111"><text x="811.50" y="411.63" font-size="9.3">正常</text></g>
<path d="M893.3 407h5.4l-2.7 3z" fill="#222"/>
<g fill="#111"><text x="904.00" y="410.43" font-size="9.3" textLength="36.4" lengthAdjust="spacing">不透明度</text><text x="940.40" y="410.80" font-size="8.835">:</text></g>
<g fill="#222"><text transform="translate(950.80,409.50) scale(0.92,1)" font-size="9.2">100%</text></g>
<path d="M985 404l2.400 2l-2.400 2z" fill="#666"/>
<g fill="#111"><text x="809.00" y="431.63" font-size="9.3">锁定</text><text x="827.60" y="432.00" font-size="8.835">:</text></g>
<rect x="836.500" y="422.500" width="8.500" height="8.500" fill="#fff" stroke="#666" stroke-width="1"/><path d="M837 423h2.700v2.700h-2.700zM842.300 423h2.700v2.700h-2.700zM839.700 425.700h2.700v2.700h-2.700zM837 428.300h2.700v2.700h-2.700zM842.300 428.300h2.700v2.700h-2.700z" fill="#bdbdbd"/>
<path d="M859.500 422.500c-1.800 0.500 -4 2.800 -5.800 4.800l1.200 1.200c2 -1.600 4.200 -4.200 4.600 -6z" fill="#333"/><path d="M853.300 427.800l1.300 1.300c-0.700 1.500 -2.300 2 -4 1.600c1.100 -0.700 1.200 -1.800 2.700 -2.900z" fill="#222"/>
<path d="M868 423v8M864 427h8" stroke="#333" stroke-width="1"/><path d="M868 422l1.500 1.800h-3zM868 432l1.500 -1.800h-3zM863 427l1.800 -1.500v3zM873 427l-1.800 -1.500v3z" fill="#333"/>
<rect x="879" y="426" width="7.200" height="4.800" rx="0.800" fill="#333"/><path d="M880.600 426v-1.300a2 2 0 0 1 4 0v1.300" stroke="#333" stroke-width="1.300" fill="none"/>
<g fill="#111"><text x="923.00" y="431.63" font-size="9.3">填充</text><text x="941.60" y="432.00" font-size="8.835">:</text></g>
<g fill="#222"><text transform="translate(950.80,431.30) scale(0.92,1)" font-size="9.2">100%</text></g>
<path d="M985 426l2.400 2l-2.400 2z" fill="#666"/>
<path d="M986 447.500l2.700 -2.800l2.700 2.800z" fill="#aaa"/>
<path d="M808.4 452.90000000000003c2.800 -3.800 6.400 -3.800 9.200 0c-2.800 3.200 -6.400 3.200 -9.200 0z" fill="#bcbcbc" stroke="#444" stroke-width="0.800"/><ellipse cx="812.8" cy="452.8" rx="2.500" ry="2.200" fill="#1e1e1e"/><path d="M808.2 452.0c2.800 -4 6.600 -4 9.600 -0.300" stroke="#2e2e2e" stroke-width="1.400" fill="none"/>
<path d="M808.4 482.90000000000003c2.800 -3.800 6.400 -3.800 9.200 0c-2.800 3.200 -6.400 3.200 -9.200 0z" fill="#bcbcbc" stroke="#444" stroke-width="0.800"/><ellipse cx="812.8" cy="482.8" rx="2.500" ry="2.200" fill="#1e1e1e"/><path d="M808.2 482.0c2.800 -4 6.600 -4 9.600 -0.300" stroke="#2e2e2e" stroke-width="1.400" fill="none"/>
<circle cx="834" cy="448.500" r="3" fill="#000"/>
<g fill="#fff"><text x="850.00" y="456.92" font-size="9.4" stroke="#fff" stroke-width="0.35">图层</text><text x="868.80" y="457.30" font-size="9.3" stroke="#fff" stroke-width="0.35"> 1</text></g>
<g fill="#222" transform="translate(852.50,488.00) skewX(-14) translate(-852.50,-488.00)"><text x="852.50" y="487.64" font-size="8.9" font-weight="bold">背景</text></g>
<rect x="963.500" y="482.500" width="7" height="5" rx="0.800" fill="#ddd" stroke="#444" stroke-width="1"/><path d="M965 482.500v-1.500a2 2 0 0 1 4 0v1.500" stroke="#444" stroke-width="1.100" fill="none"/>
<ellipse cx="902.200" cy="451.900" rx="13.200" ry="8.600" fill="none" stroke="#ee0a10" stroke-width="3.200" transform="rotate(-4 902.200 451.900)"/>
<path d="M754.500 553.500L894 455.800" stroke="#ee0a10" stroke-width="3.600" stroke-linecap="round"/><path d="M876.500 457.200L894 455.300L886 470.500" stroke="#ee0a10" stroke-width="3.200" fill="none" stroke-linecap="round" stroke-linejoin="round"/>
<circle cx="847" cy="667" r="3.200" fill="none" stroke="#efefef" stroke-width="1.200"/><circle cx="863.500" cy="667" r="3.200" fill="none" stroke="#e6e6e6" stroke-width="1.200"/>
</svg></div></body></html>
